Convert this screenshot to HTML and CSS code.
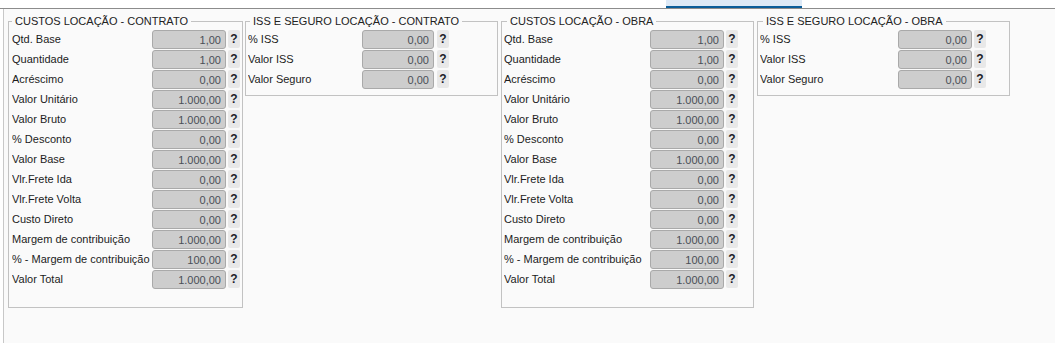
FILE: index.html
```html
<!DOCTYPE html>
<html lang="pt-BR">

<head>
    <meta charset="UTF-8">
    <meta name="viewport" content="width=device-width, initial-scale=1.0">
    <title>Custos Locação</title>
    <link rel="stylesheet" href="styles.css">
</head>

<body>
    <div class="tabbar">
        <div class="tab-active"></div>
    </div>

    <div class="panel">
        <!-- Custos contrato -->
        <fieldset class="box box-custos-contrato">
            <legend>CUSTOS LOCAÇÃO - CONTRATO</legend>
            <div class="row"><span class="lbl">Qtd. Base</span><input class="val" type="text" value="1,00" readonly><span class="help">?</span></div>
            <div class="row"><span class="lbl">Quantidade</span><input class="val" type="text" value="1,00" readonly><span class="help">?</span></div>
            <div class="row"><span class="lbl">Acréscimo</span><input class="val" type="text" value="0,00" readonly><span class="help">?</span></div>
            <div class="row"><span class="lbl">Valor Unitário</span><input class="val" type="text" value="1.000,00" readonly><span class="help">?</span></div>
            <div class="row"><span class="lbl">Valor Bruto</span><input class="val" type="text" value="1.000,00" readonly><span class="help">?</span></div>
            <div class="row"><span class="lbl">% Desconto</span><input class="val" type="text" value="0,00" readonly><span class="help">?</span></div>
            <div class="row"><span class="lbl">Valor Base</span><input class="val" type="text" value="1.000,00" readonly><span class="help">?</span></div>
            <div class="row"><span class="lbl">Vlr.Frete Ida</span><input class="val" type="text" value="0,00" readonly><span class="help">?</span></div>
            <div class="row"><span class="lbl">Vlr.Frete Volta</span><input class="val" type="text" value="0,00" readonly><span class="help">?</span></div>
            <div class="row"><span class="lbl">Custo Direto</span><input class="val" type="text" value="0,00" readonly><span class="help">?</span></div>
            <div class="row"><span class="lbl">Margem de contribuição</span><input class="val" type="text" value="1.000,00" readonly><span class="help">?</span></div>
            <div class="row"><span class="lbl">% - Margem de contribuição</span><input class="val" type="text" value="100,00" readonly><span class="help">?</span></div>
            <div class="row"><span class="lbl">Valor Total</span><input class="val" type="text" value="1.000,00" readonly><span class="help">?</span></div>
        </fieldset>

        <!-- ISS contrato -->
        <fieldset class="box box-iss-contrato">
            <legend>ISS E SEGURO LOCAÇÃO - CONTRATO</legend>
            <div class="row"><span class="lbl">% ISS</span><input class="val" type="text" value="0,00" readonly><span class="help">?</span></div>
            <div class="row"><span class="lbl">Valor ISS</span><input class="val" type="text" value="0,00" readonly><span class="help">?</span></div>
            <div class="row"><span class="lbl">Valor Seguro</span><input class="val" type="text" value="0,00" readonly><span class="help">?</span></div>
        </fieldset>

        <!-- Custos obra -->
        <fieldset class="box box-custos-obra">
            <legend>CUSTOS LOCAÇÃO - OBRA</legend>
            <div class="row"><span class="lbl">Qtd. Base</span><input class="val" type="text" value="1,00" readonly><span class="help">?</span></div>
            <div class="row"><span class="lbl">Quantidade</span><input class="val" type="text" value="1,00" readonly><span class="help">?</span></div>
            <div class="row"><span class="lbl">Acréscimo</span><input class="val" type="text" value="0,00" readonly><span class="help">?</span></div>
            <div class="row"><span class="lbl">Valor Unitário</span><input class="val" type="text" value="1.000,00" readonly><span class="help">?</span></div>
            <div class="row"><span class="lbl">Valor Bruto</span><input class="val" type="text" value="1.000,00" readonly><span class="help">?</span></div>
            <div class="row"><span class="lbl">% Desconto</span><input class="val" type="text" value="0,00" readonly><span class="help">?</span></div>
            <div class="row"><span class="lbl">Valor Base</span><input class="val" type="text" value="1.000,00" readonly><span class="help">?</span></div>
            <div class="row"><span class="lbl">Vlr.Frete Ida</span><input class="val" type="text" value="0,00" readonly><span class="help">?</span></div>
            <div class="row"><span class="lbl">Vlr.Frete Volta</span><input class="val" type="text" value="0,00" readonly><span class="help">?</span></div>
            <div class="row"><span class="lbl">Custo Direto</span><input class="val" type="text" value="0,00" readonly><span class="help">?</span></div>
            <div class="row"><span class="lbl">Margem de contribuição</span><input class="val" type="text" value="1.000,00" readonly><span class="help">?</span></div>
            <div class="row"><span class="lbl">% - Margem de contribuição</span><input class="val" type="text" value="100,00" readonly><span class="help">?</span></div>
            <div class="row"><span class="lbl">Valor Total</span><input class="val" type="text" value="1.000,00" readonly><span class="help">?</span></div>
        </fieldset>

        <!-- ISS obra -->
        <fieldset class="box box-iss-obra">
            <legend>ISS E SEGURO LOCAÇÃO - OBRA</legend>
            <div class="row"><span class="lbl">% ISS</span><input class="val" type="text" value="0,00" readonly><span class="help">?</span></div>
            <div class="row"><span class="lbl">Valor ISS</span><input class="val" type="text" value="0,00" readonly><span class="help">?</span></div>
            <div class="row"><span class="lbl">Valor Seguro</span><input class="val" type="text" value="0,00" readonly><span class="help">?</span></div>
        </fieldset>
    </div>
</body>

</html>
```

FILE: styles.css
```css
/* Basic Reset */
* {
    box-sizing: border-box;
}

body {
    margin: 0;
    background: #fff;
    font-family: 'Liberation Sans', Arial, sans-serif;
    font-size: 11px;
    color: #222;
    overflow: hidden;
}

/* Tab strip */
.tabbar {
    height: 9px;
    border-bottom: 1px solid #8c8c8c;
}

.tab-active {
    margin-left: 666px;
    width: 136px;
    height: 8px;
    background-color: #dde9f6;
    border-bottom: 2px solid #0b5d99;
}

/* Content panel */
.panel {
    display: flex;
    align-items: flex-start;
    margin-left: 3px;
    height: calc(100vh - 9px);
    padding: 6px 0 0 4px;
    background-color: #fafafa;
    border-left: 1px solid #c8c8c8;
}

.box {
    width: 253px;
    margin: 0;
    padding: 2px 2px 5px 2px;
    border: 1px solid #c2c2c2;
    background-color: #fafafa;
}

.box legend {
    padding: 0 3px;
    line-height: 13px;
    font-size: 11px;
    color: #222;
}

.box-custos-contrato {
    width: 235px;
    padding-left: 3px;
    padding-bottom: 17px;
}

.box-iss-contrato {
    margin-left: 2px;
}

.box-iss-contrato legend {
    margin-left: 2px;
}

.box-custos-obra {
    margin-left: 3px;
    padding-bottom: 17px;
}

.box-custos-obra legend,
.box-iss-obra legend {
    margin-left: 3px;
}

.box-iss-obra {
    margin-left: 3px;
}

/* Rows */
.row {
    display: flex;
    align-items: flex-start;
    height: 20px;
}

.lbl {
    flex: none;
    line-height: 19px;
    white-space: nowrap;
    overflow: hidden;
    color: #1c1c1c;
}

.box-custos-contrato .lbl {
    width: 140px;
}

.box-iss-contrato .lbl {
    width: 114px;
}

.box-custos-obra .lbl {
    width: 146px;
}

.box-iss-obra .lbl {
    width: 138px;
}

.val {
    flex: none;
    width: 74px;
    height: 19px;
    margin: 0;
    padding: 0 4px 0 2px;
    font-family: 'Liberation Sans', Arial, sans-serif;
    font-size: 11px;
    text-align: right;
    color: #4a4f57;
    background-color: #cdcdcd;
    border: 1px solid #a9a9a9;
    border-radius: 3px;
    outline: none;
}

.box-iss-contrato .val {
    width: 72px;
}

.help {
    flex: none;
    width: 12px;
    height: 18px;
    margin-left: 2px;
    line-height: 18px;
    text-align: center;
    font-size: 12px;
    font-weight: bold;
    color: #1d1d2a;
    background-color: #e8e8e8;
    border-radius: 2px;
}

.box-iss-contrato .help {
    margin-left: 3px;
}
```
